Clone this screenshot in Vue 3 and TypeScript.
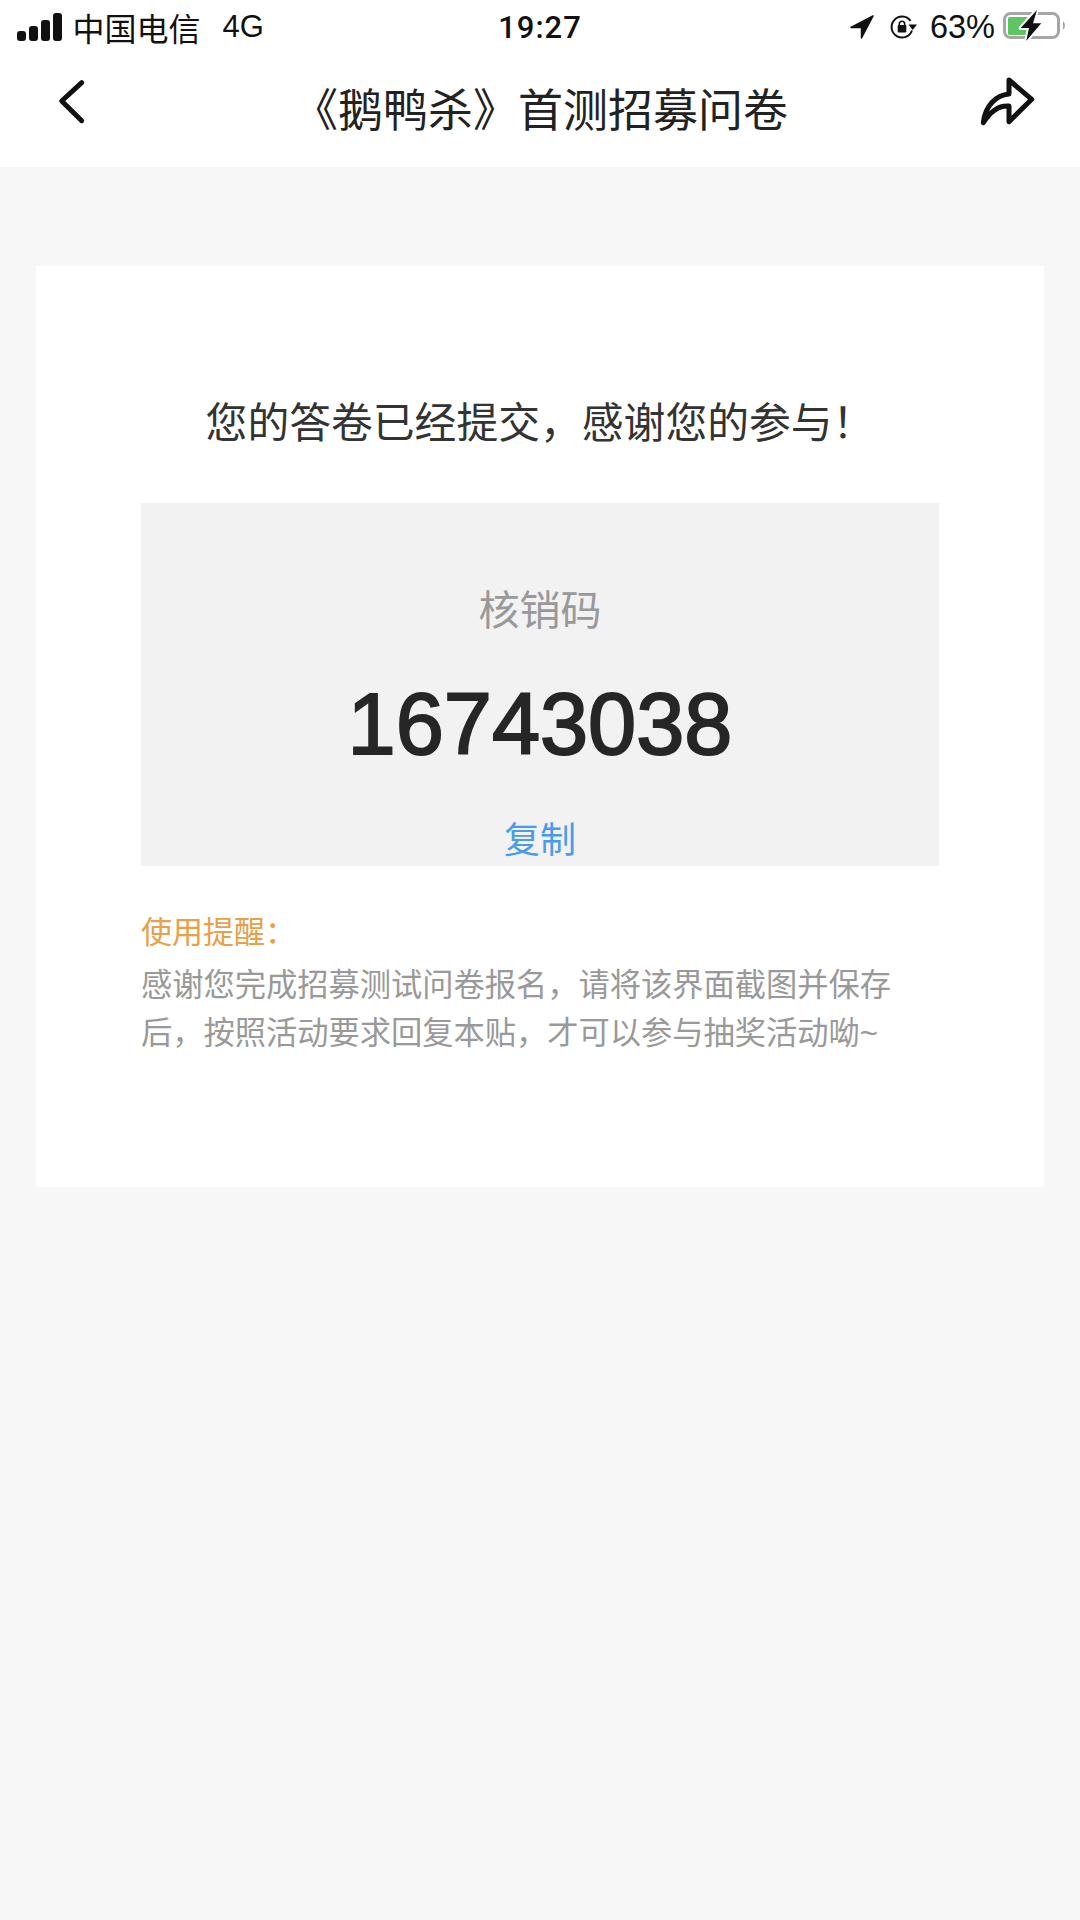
<script setup lang="ts">
const title = '《鹅鸭杀》首测招募问卷'
const code = '16743038'
const signalBars = [10, 15, 21, 28]
const boltPath = 'M34 1 17.700 19H26l-2.700 12.700L38.300 14.300H30z'
</script>

<template>
  <div class="page">
    <header class="top">
      <div class="status">
        <div class="status-left">
          <div class="signal">
            <i v-for="h in signalBars" :key="h" :style="{ height: h + 'px' }"></i>
          </div>
          <span class="carrier">中国电信</span>
          <span class="net">4G</span>
        </div>
        <div class="clock">19:27</div>
        <div class="status-right">
          <svg class="loc" width="24" height="24" viewBox="0 0 24 24">
            <path d="M23 1 1 12.500h10.500V23z" fill="#111" stroke="#111" stroke-width="1.500" stroke-linejoin="round" />
          </svg>
          <svg class="lock" width="30" height="32" viewBox="0 0 30 32">
            <path d="M21.500 9.800A10.500 10.500 0 1 0 23 19.500" fill="none" stroke="#111" stroke-width="2" />
            <path d="M19.500 13.500h8.500L23.700 19z" fill="#111" />
            <rect x="8.700" y="14" width="8.600" height="7.500" rx="1" fill="#111" />
            <path d="M10.300 14.500V13a2.700 2.700 0 0 1 5.400 0v1.500" fill="none" stroke="#111" stroke-width="1.600" />
          </svg>
          <span class="pct">63%</span>
          <svg class="batt" width="64" height="36" viewBox="0 0 64 36">
            <rect x="1.500" y="4.500" width="54" height="24" rx="6" fill="none" stroke="#a6a6a6" stroke-width="3" />
            <rect x="5" y="8" width="21" height="18" rx="1.500" fill="#5fc563" />
            <path d="M60 12.500c2.500 1 2.500 7 0 8z" fill="#a6a6a6" />
            <path :d="boltPath" fill="#fff" stroke="#fff" stroke-width="4" stroke-linejoin="round" />
            <path :d="boltPath" fill="#111" />
          </svg>
        </div>
      </div>
      <nav class="nav">
        <svg class="back" width="34" height="50" viewBox="0 0 34 50">
          <path d="M29.700 5.700 9.700 24l20 19.700" fill="none" stroke="#111" stroke-width="5" stroke-linecap="round" stroke-linejoin="round" />
        </svg>
        <h1 class="nav-title">{{ title }}</h1>
        <svg class="share" width="60" height="50" viewBox="0 0 60 50">
          <path d="M5.300 46.700C7 30 18 19 31 18V4L53.700 23.300 31 45.700V30C20 29 12 36 5.300 46.700z" fill="none" stroke="#111" stroke-width="5" stroke-linejoin="round" stroke-linecap="round" />
        </svg>
      </nav>
    </header>

    <main class="content">
      <section class="card">
        <h2 class="done">您的答卷已经提交，感谢您的参与！</h2>
        <div class="code-box">
          <div class="code-label">核销码</div>
          <div class="code-value">{{ code }}</div>
          <a class="copy">复制</a>
        </div>
        <div class="tips">
          <div class="tips-title">使用提醒：</div>
          <p class="tips-text">感谢您完成招募测试问卷报名，请将该界面截图并保存后，按照活动要求回复本贴，才可以参与抽奖活动呦~</p>
        </div>
      </section>
    </main>
  </div>
</template>

<style>
html,
body {
  margin: 0;
  background: #f7f7f7;
}
</style>

<style scoped>
.page {
  width: 1080px;
  height: 1920px;
  overflow: hidden;
  background: #f7f7f7;
  font-family: "Liberation Sans", "Noto Sans CJK SC", sans-serif;
}

.top {
  height: 167px;
  background: #fff;
}

.status {
  height: 54px;
  padding: 0 13px 0 17px;
  display: grid;
  grid-template-columns: 1fr auto 1fr;
  align-items: center;
  color: #111;
}

.status-left,
.status-right {
  display: flex;
  align-items: center;
}

.status-right {
  justify-content: flex-end;
}

.signal {
  display: flex;
  align-items: flex-end;
  gap: 3.500px;
  height: 28px;
  margin-right: 11px;
}

.signal i {
  display: block;
  width: 8.500px;
  border-radius: 3px;
  background: #111;
}

.carrier {
  font-size: 32px;
}

.net {
  font-size: 31px;
  margin-left: 22px;
}

.clock {
  font-family: "Roboto", "Liberation Sans", sans-serif;
  font-size: 31px;
  font-weight: 500;
  letter-spacing: 1px;
  margin-right: 4px;
}

.lock {
  margin-left: 15px;
}

.pct {
  font-size: 32.500px;
  margin-left: 11px;
  margin-right: 8px;
}

.nav {
  height: 113px;
  padding: 0 42px 0 52px;
  display: flex;
  align-items: flex-start;
  justify-content: space-between;
}

.back {
  margin-top: 23px;
}

.share {
  margin-top: 22px;
}

.nav-title {
  margin: 28px 0 0 17px;
  font-size: 45px;
  line-height: 60px;
  font-weight: 400;
  color: #222;
}

.content {
  padding: 99px 36px 0;
}

.card {
  height: 921px;
  box-sizing: border-box;
  padding: 128px 105px 0;
  background: #fff;
}

.done {
  margin: 0;
  font-size: 41.800px;
  line-height: 60px;
  font-weight: 400;
  text-align: center;
  color: #333;
  white-space: nowrap;
}

.code-box {
  margin-top: 49px;
  height: 363px;
  box-sizing: border-box;
  padding-top: 83px;
  background: #f2f2f2;
  display: flex;
  flex-direction: column;
  align-items: center;
}

.code-label {
  font-size: 41px;
  line-height: 50px;
  color: #999;
}

.code-value {
  margin-top: 38px;
  font-size: 86.500px;
  line-height: 100px;
  font-weight: 400;
  color: #262626;
  -webkit-text-stroke: 2px #262626;
}

.copy {
  margin-top: 45px;
  font-size: 36px;
  line-height: 44px;
  color: #4a9be8;
}

.tips {
  margin-top: 43px;
}

.tips-title {
  font-size: 31px;
  line-height: 48px;
  margin-bottom: 5px;
  color: #e8a04a;
}

.tips-text {
  margin: 0;
  font-size: 31.250px;
  line-height: 48px;
  color: #999;
}
</style>
